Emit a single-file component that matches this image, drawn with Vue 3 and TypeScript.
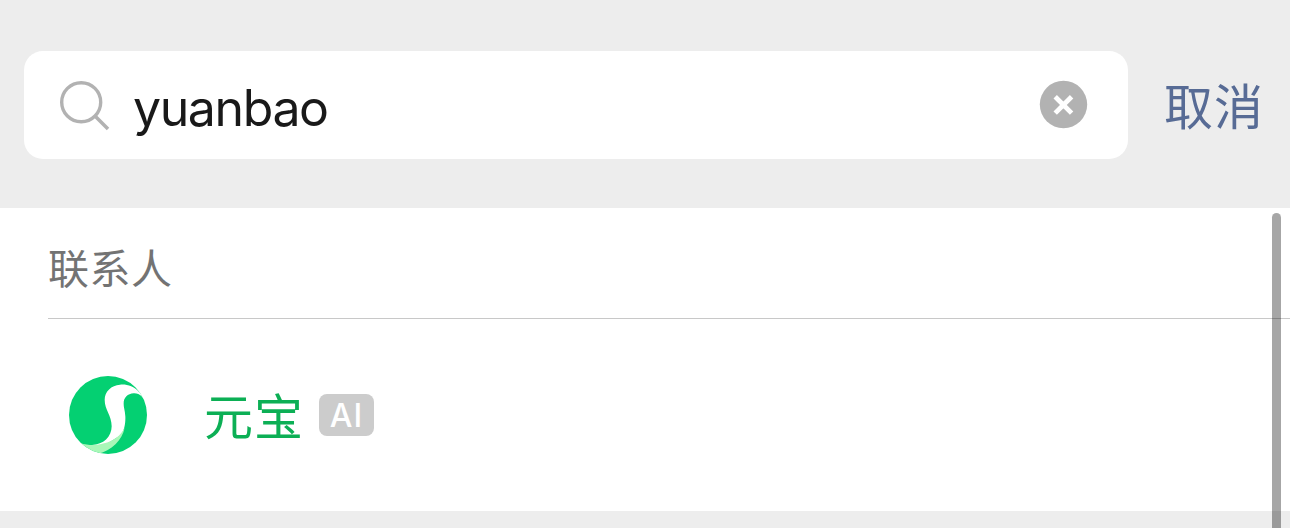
<script setup lang="ts">
import { ref } from 'vue'

interface Contact {
  name: string
  tag: string
}

const query = ref('yuanbao')
const contacts: Contact[] = [{ name: '元宝', tag: 'AI' }]
</script>

<template>
  <main class="screen">
    <header class="search-bar">
      <div class="search-box">
        <svg class="search-icon" viewBox="0 0 50 50" fill="none" stroke="#b2b2b2">
          <circle cx="21.2" cy="21.2" r="19.5" stroke-width="3.4" />
          <path d="M35 35L48 48" stroke-width="3.6" />
        </svg>
        <span class="query">{{ query }}</span>
        <svg class="clear" viewBox="0 0 48 48">
          <circle cx="23.5" cy="23.5" r="23.7" fill="#b2b2b2" />
          <path d="M15.2 15.7L31.6 32.1M31.6 15.7L15.2 32.1" stroke="#fff" stroke-width="4.8" />
        </svg>
      </div>
      <span class="cancel">取消</span>
    </header>
    <section class="results">
      <h2 class="heading">联系人</h2>
      <div v-for="contact in contacts" :key="contact.name" class="contact">
        <svg class="avatar" viewBox="27 30 234 234">
          <defs>
            <clipPath id="disc"><circle cx="144" cy="147" r="117" /></clipPath>
          </defs>
          <g clip-path="url(#disc)">
            <rect x="27" y="30" width="234" height="234" fill="#04d072" />
            <path d="M237 77C221 61 201 54 180 56C154 58 134 76 134 101C134 132 155 148 155 181C155 213 130 236 96 237L115 250L183 207C193 194 197 171 196 151C195 133 191 126 191 112C191 95 203 83 221 82C239 81 252 94 258 113L275 85Z" fill="#fff" />
            <path d="M60 231C87 239 109 239 132 232C158 226 181 211 194 185C187 222 155 254 112 264L60 264Z" fill="#a9f7b8" />
          </g>
        </svg>
        <span class="name">{{ contact.name }}</span>
        <span class="tag">{{ contact.tag }}</span>
      </div>
    </section>
    <div class="scrollbar"></div>
  </main>
</template>

<style>
body {
  margin: 0;
}
</style>

<style scoped>
.screen {
  position: relative;
  width: 1290px;
  height: 528px;
  overflow: hidden;
  background: #ededed;
  font-family: Inter, "Noto Sans CJK SC", sans-serif;
}
.search-bar {
  display: flex;
  align-items: center;
  box-sizing: border-box;
  height: 208px;
  padding: 2px 0 0 24px;
}
.search-box {
  display: flex;
  align-items: center;
  box-sizing: border-box;
  width: 1104px;
  height: 108px;
  padding: 0 40px 0 36px;
  border-radius: 19px;
  background: #fff;
}
.search-icon {
  width: 50px;
  height: 50px;
  margin-top: 2px;
}
.query {
  flex: 1;
  margin: 5px 0 0 23px;
  color: #191919;
  font-size: 50px;
  line-height: 60px;
  letter-spacing: -1.4px;
}
.clear {
  width: 48px;
  height: 48px;
  overflow: visible;
}
.cancel {
  margin: -2px 0 0 36px;
  color: #576b95;
  font: 49px/70px "Noto Sans CJK SC", sans-serif;
  letter-spacing: 1px;
  white-space: nowrap;
}
.results {
  height: 303px;
  background: #fff;
}
.heading {
  box-sizing: border-box;
  height: 111px;
  margin: 0 0 0 48px;
  padding-top: 28px;
  border-bottom: 1px solid #c8c8c8;
  color: #737373;
  font: 400 41px/60px "Noto Sans CJK SC", sans-serif;
  letter-spacing: 0.5px;
}
.contact {
  display: flex;
  align-items: center;
  height: 192px;
  padding-left: 69px;
}
.avatar {
  width: 78px;
  height: 78px;
}
.name {
  margin: -3px 0 0 57px;
  color: #0caf55;
  font: 49px/70px "Noto Sans CJK SC", sans-serif;
  letter-spacing: 1px;
}
.tag {
  box-sizing: border-box;
  width: 55px;
  height: 42px;
  margin-left: 15px;
  border-radius: 8px;
  background: #ccc;
  color: #fff;
  font-size: 32px;
  font-weight: 450;
  line-height: 44px;
  letter-spacing: 1px;
  text-align: center;
}
.scrollbar {
  position: absolute;
  top: 213px;
  left: 1272px;
  width: 9px;
  height: 330px;
  border-radius: 5px;
  background: rgba(0, 0, 0, 0.35);
}
</style>
